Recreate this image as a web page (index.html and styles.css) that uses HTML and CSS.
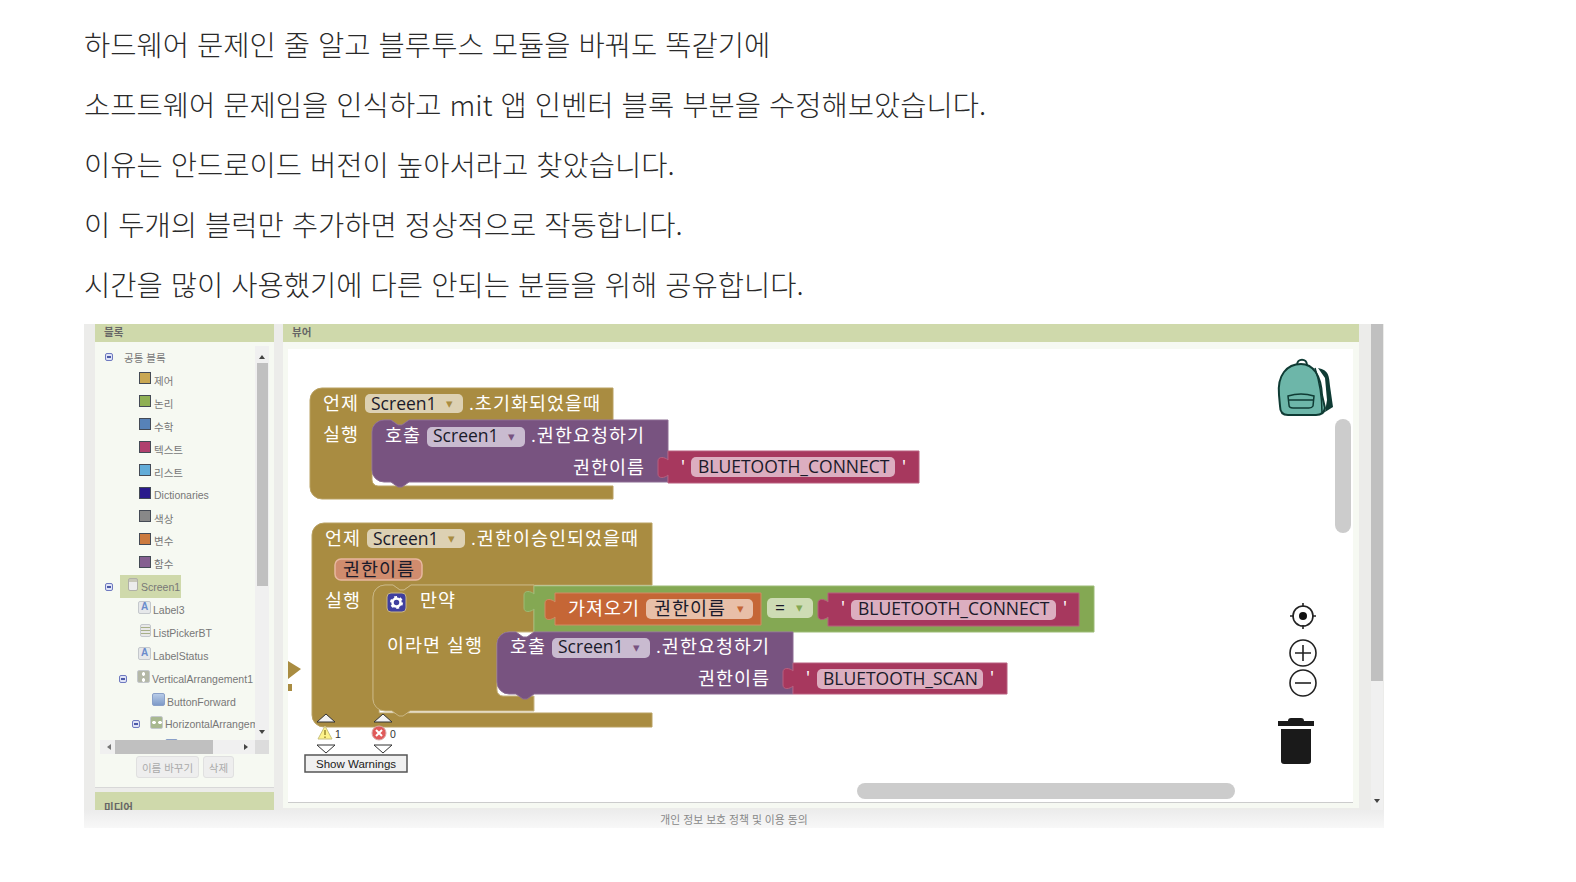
FILE: index.html
```html
<!DOCTYPE html>
<html lang="ko">
<head>
    <meta charset="UTF-8">
    <meta name="viewport" content="width=device-width, initial-scale=1.0">
    <title>블루투스 권한 블록</title>
    <link rel="stylesheet" href="styles.css">
</head>
<body>
    <div class="post">
        <p>하드웨어 문제인 줄 알고 블루투스 모듈을 바꿔도 똑같기에</p>
        <p>소프트웨어 문제임을 인식하고 mit 앱 인벤터 블록 부분을 수정해보았습니다.</p>
        <p>이유는 안드로이드 버전이 높아서라고 찾았습니다.</p>
        <p>이 두개의 블럭만 추가하면 정상적으로 작동합니다.</p>
        <p>시간을 많이 사용했기에 다른 안되는 분들을 위해 공유합니다.</p>
    </div>

    <div class="shot">
        <div class="shot-main">
            <div class="palette">
                <div class="box-head">블록</div>
                <div class="palette-body">
                    <div class="tree-area">
                        <div class="tree">
                            <div class="row root"><span class="exp"></span>공통 블록</div>
                            <div class="row item"><span class="swatch c-control"></span>제어</div>
                            <div class="row item"><span class="swatch c-logic"></span>논리</div>
                            <div class="row item"><span class="swatch c-math"></span>수학</div>
                            <div class="row item"><span class="swatch c-text"></span>텍스트</div>
                            <div class="row item"><span class="swatch c-list"></span>리스트</div>
                            <div class="row item"><span class="swatch c-dict"></span>Dictionaries</div>
                            <div class="row item"><span class="swatch c-color"></span>색상</div>
                            <div class="row item"><span class="swatch c-var"></span>변수</div>
                            <div class="row item"><span class="swatch c-proc"></span>함수</div>
                            <div class="row root"><span class="exp"></span><span class="selected"><span class="cmp cmp-screen"></span>Screen1</span></div>
                            <div class="row comp"><span class="cmp cmp-label">A</span>Label3</div>
                            <div class="row comp"><span class="cmp cmp-list"></span>ListPickerBT</div>
                            <div class="row comp"><span class="cmp cmp-label">A</span>LabelStatus</div>
                            <div class="row vert"><span class="exp"></span><span class="cmp cmp-vert"></span>VerticalArrangement1</div>
                            <div class="row btn-row"><span class="cmp cmp-button"></span>ButtonForward</div>
                            <div class="row horiz"><span class="exp"></span><span class="cmp cmp-horiz"></span>HorizontalArrangement1</div>
                            <div class="row last"><span class="cmp cmp-button"></span></div>
                        </div>
                        <div class="vscroll">
                            <span class="arrow-up"></span>
                            <div class="vthumb"></div>
                            <span class="arrow-down"></span>
                        </div>
                    </div>
                    <div class="hscroll">
                        <span class="arrow-left"></span>
                        <div class="hthumb"></div>
                        <span class="arrow-right"></span>
                        <div class="corner"></div>
                    </div>
                    <div class="tree-buttons">
                        <button class="soft-btn wide">이름 바꾸기</button>
                        <button class="soft-btn">삭제</button>
                    </div>
                </div>
                <div class="box-head media">미디어</div>
            </div>

            <div class="viewer">
                <div class="box-head">뷰어</div>
                <div class="viewer-body">
                    <svg class="workspace" width="1065" height="453" viewBox="288 349 1065 453">
                        <!-- first event -->
                        <path class="gold" d="M310,400a12,12 0 0 1 12,-12H613V420H409l-7,5h-4l-7,-5H384a12,12 0 0 0 -12,12V480a6,6 0 0 0 6,6H613V499H322a12,12 0 0 1 -12,-12Z"/>
                        <path class="purple" d="M384,420H391l7,5h4l7,-5H668V482H409l-7,5h-4l-7,-5H384a12,12 0 0 1 -12,-12V432a12,12 0 0 1 12,-12Z"/>
                        <path class="pink" d="M668,451H919V483H668V475c-3,3 -10,4 -10,-1v-13c0,-5 7,-4 10,-1Z"/>
                        <rect class="f-gold" x="365" y="394" width="98" height="19" rx="5"/>
                        <rect class="f-purple" x="427" y="427" width="98" height="20" rx="5"/>
                        <rect class="f-pink" x="691" y="457" width="204" height="20" rx="5"/>
                        <text class="lbl" x="323" y="410">언제</text>
                        <text class="fld" x="371" y="410">Screen1</text>
                        <text class="arr a-gold" x="446" y="408">▾</text>
                        <text class="lbl" x="469" y="410">.초기화되었을때</text>
                        <text class="lbl" x="323" y="441">실행</text>
                        <text class="lbl" x="385" y="442">호출</text>
                        <text class="fld" x="433" y="442">Screen1</text>
                        <text class="arr a-purple" x="508" y="441">▾</text>
                        <text class="lbl" x="531" y="442">.권한요청하기</text>
                        <text class="lbl" x="573" y="474">권한이름</text>
                        <text class="lbl" x="681" y="473">'</text>
                        <text class="fld" x="698" y="473">BLUETOOTH_CONNECT</text>
                        <text class="lbl" x="902" y="473">'</text>

                        <!-- second event -->
                        <path class="gold" d="M312,535a12,12 0 0 1 12,-12H652V585H411l-7,5h-4l-7,-5H385a12,12 0 0 0 -12,12V700a6,6 0 0 0 6,6V713H652V727H324a12,12 0 0 1 -12,-12Z"/>
                        <path class="gold inner" d="M385,585H393l7,5h4l7,-5H534V632H509a12,12 0 0 0 -12,12V690a6,6 0 0 0 6,6H534V711H410l-7,5h-4l-7,-5H385a12,12 0 0 1 -12,-12V597a12,12 0 0 1 12,-12Z"/>
                        <path class="green" d="M534,586H1094V632H534V609c-3,3 -10,4 -10,-1v-13c0,-5 7,-4 10,-1Z"/>
                        <path class="orange" d="M555,593H761V625H555V617c-3,3 -10,4 -10,-1v-13c0,-5 7,-4 10,-1Z"/>
                        <path class="pink" d="M828,593H1079V626H828V617c-3,3 -10,4 -10,-1v-13c0,-5 7,-4 10,-1Z"/>
                        <path class="purple" d="M509,632H516l7,5h4l7,-5H793V694H534l-7,5h-4l-7,-5H509a12,12 0 0 1 -12,-12V644a12,12 0 0 1 12,-12Z"/>
                        <path class="pink" d="M793,663H1007V694H793V686c-3,3 -10,4 -10,-1v-13c0,-5 7,-4 10,-1Z"/>
                        <rect class="f-gold" x="367" y="529" width="98" height="19" rx="5"/>
                        <rect class="f-param" x="335" y="559" width="87" height="21" rx="6"/>
                        <rect class="f-orange" x="646" y="599" width="107" height="20" rx="5"/>
                        <rect class="f-green" x="767" y="598" width="46" height="20" rx="5"/>
                        <rect class="f-pink" x="851" y="600" width="205" height="20" rx="5"/>
                        <rect class="f-purple" x="552" y="638" width="98" height="20" rx="5"/>
                        <rect class="f-pink" x="817" y="669" width="166" height="20" rx="5"/>
                        <text class="lbl" x="325" y="545">언제</text>
                        <text class="fld" x="373" y="545">Screen1</text>
                        <text class="arr a-gold" x="448" y="543">▾</text>
                        <text class="lbl" x="471" y="545">.권한이승인되었을때</text>
                        <text class="fld ko" x="343" y="576">권한이름</text>
                        <text class="lbl" x="325" y="607">실행</text>
                        <rect class="gear-box" x="387" y="593" width="19" height="19" rx="4"/>
                        <circle class="gear-teeth" cx="396.5" cy="602.5" r="5"/>
                        <circle class="gear-ring" cx="396.5" cy="602.5" r="4"/>
                        <text class="lbl" x="420" y="607">만약</text>
                        <text class="lbl" x="387" y="652">이라면 실행</text>
                        <text class="lbl" x="568" y="615">가져오기</text>
                        <text class="fld ko" x="654" y="615">권한이름</text>
                        <text class="arr a-orange" x="737" y="613">▾</text>
                        <text class="fld" x="775" y="614">=</text>
                        <text class="arr a-green" x="796" y="612">▾</text>
                        <text class="lbl" x="841" y="614">'</text>
                        <text class="fld" x="858" y="615">BLUETOOTH_CONNECT</text>
                        <text class="lbl" x="1063" y="614">'</text>
                        <text class="lbl" x="510" y="653">호출</text>
                        <text class="fld" x="558" y="653">Screen1</text>
                        <text class="arr a-purple" x="633" y="652">▾</text>
                        <text class="lbl" x="656" y="653">.권한요청하기</text>
                        <text class="lbl" x="698" y="685">권한이름</text>
                        <text class="lbl" x="806" y="684">'</text>
                        <text class="fld" x="823" y="685">BLUETOOTH_SCAN</text>
                        <text class="lbl" x="990" y="684">'</text>

                        <!-- warning indicator -->
                        <path class="tri" d="M317,722l9,-8 9,8Z"/>
                        <path class="tri" d="M374,722l9,-8 9,8Z"/>
                        <path class="warn" d="M325,726l7,13h-14Z"/>
                        <path class="warn-mark" d="M325,730v5M325,736.5v1.5"/>
                        <text class="count" x="335" y="738">1</text>
                        <circle class="err" cx="379" cy="733" r="7"/>
                        <path class="err-x" d="M376,730l6,6M382,730l-6,6"/>
                        <text class="count" x="390" y="738">0</text>
                        <path class="tri-down" d="M317,745l9,8 9,-8Z"/>
                        <path class="tri-down" d="M374,745l9,8 9,-8Z"/>
                        <rect class="warn-btn" x="305" y="755" width="102" height="17"/>
                        <text class="warn-txt" x="316" y="768">Show Warnings</text>

                        <!-- backpack -->
                        <path class="pack-strap" d="M1318,368C1329,370 1329,376 1330,386L1333,407L1325,412L1327,400L1325,378Z"/>
                        <path class="pack-handle" d="M1297,365c0,-7 10,-7 10,0"/>
                        <path class="pack-body" d="M1279,395C1277,375 1287,364 1301,364C1313,364 1321,375 1322,395L1325,408Q1324,415 1316,415L1288,415Q1280,415 1280,406Z"/>
                        <path class="pack-line" d="M1315,368C1319,380 1322,395 1322,413"/>
                        <path class="pack-line" d="M1288,396Q1301,392 1314,396L1313,406Q1312,408 1309,408H1293Q1289,408 1289,405ZM1288,400H1314"/>

                        <!-- workspace controls -->
                        <circle class="ctl" cx="1303" cy="616" r="10"/>
                        <circle class="ctl-dot" cx="1303" cy="616" r="4"/>
                        <path class="ctl" d="M1303,603v4M1303,625v4M1290,616h4M1312,616h4"/>
                        <circle class="ctl" cx="1303" cy="653" r="13"/>
                        <path class="ctl" d="M1295,653h16M1303,645v16"/>
                        <circle class="ctl" cx="1303" cy="683" r="13"/>
                        <path class="ctl" d="M1295,683h16"/>
                        <path class="trash" d="M1288,721q0,-3 3,-3h10q3,0 3,3h10v5h-36v-5ZM1281,729h30v32q0,3 -3,3h-24q-3,0 -3,-3Z"/>

                        <rect class="ws-bar" x="1335" y="419" width="16" height="114" rx="8"/>
                        <rect class="ws-bar" x="857" y="783" width="378" height="16" rx="8"/>
                    </svg>
                </div>
                <svg class="bump" width="14" height="32" viewBox="0 0 14 32">
                    <path d="M0,0L13,8L0,18ZM0,23h4v7h-4Z"/>
                </svg>
            </div>

            <div class="page-scroll">
                <div class="page-thumb"></div>
                <span class="arrow-down"></span>
            </div>
        </div>
        <div class="shot-foot">개인 정보 보호 정책 및 이용 동의</div>
    </div>
</body>
</html>
```

FILE: styles.css
```css
body {
    margin: 0;
    background: white;
    font-family: "Noto Sans CJK KR", sans-serif;
}

/* text above the screenshot */
.post {
    padding: 14px 0 10px 84px;
}
.post p {
    margin: 0;
    height: 60px;
    line-height: 60px;
    font-size: 28.55px;
    font-weight: 300;
    color: #2a2a2a;
}

/* screenshot */
.shot {
    width: 1300px;
    margin-left: 84px;
    background: #ececea;
}
.shot-main {
    display: flex;
    height: 486px;
    padding-left: 11px;
    overflow: hidden;
}
.shot-foot {
    height: 18px;
    line-height: 18px;
    text-align: center;
    font-size: 10.8px;
    color: #888;
    background: linear-gradient(#ececec, #f8f8f8);
}

.box-head {
    height: 18px;
    line-height: 16px;
    padding-left: 9px;
    background: #cfd9ab;
    font-size: 10.5px;
    font-weight: 700;
    color: #666;
}

/* palette */
.palette {
    width: 179px;
    margin-right: 9px;
}
.palette-body {
    height: 446px;
    box-sizing: border-box;
    padding: 4px 5px 0;
    background: #f6f9f2;
    border-bottom: 1px solid #d8d8d8;
    font-family: "Liberation Sans", "Noto Sans CJK KR", sans-serif;
    font-size: 10.5px;
    color: #777;
}
.media {
    margin-top: 4px;
    line-height: 30px;
    height: 18px;
    overflow: hidden;
}
.tree-area {
    display: flex;
    height: 394px;
}
.tree {
    width: 155px;
    overflow: hidden;
    white-space: nowrap;
}
.row {
    display: flex;
    align-items: center;
    height: 22.95px;
}
.root { padding-left: 5px; }
.item { padding-left: 39px; }
.comp { padding-left: 38px; }
.vert { padding-left: 19px; }
.btn-row { padding-left: 52px; }
.horiz { padding-left: 32px; }
.last { padding-left: 65px; }
.root > .exp { margin-right: 11px; }
.exp {
    position: relative;
    flex: none;
    box-sizing: border-box;
    width: 8px;
    height: 8px;
    border: 1px solid #6f7ac0;
    border-radius: 2px;
    background: #dfe3f6;
}
.exp::after {
    content: "";
    position: absolute;
    left: 1px;
    top: 2px;
    width: 4px;
    height: 2px;
    background: #4c5aa8;
}
.root > .exp + .selected {
    margin-left: -4px;
}
.selected {
    display: flex;
    align-items: center;
    width: 61px;
    height: 23px;
    box-sizing: border-box;
    padding-left: 7px;
    background: #cfd9ab;
}
.swatch {
    flex: none;
    box-sizing: border-box;
    width: 12px;
    height: 12px;
    margin: -4px 3px 0 0;
    border: 1px solid #444a55;
}
.c-control { background: #c9a752; }
.c-logic { background: #8fb054; }
.c-math { background: #5782b8; }
.c-text { background: #b0406e; }
.c-list { background: #62acd8; }
.c-dict { background: #2a1a8c; }
.c-color { background: #888; }
.c-var { background: #cc7a3e; }
.c-proc { background: #855f90; }
.cmp {
    flex: none;
    box-sizing: border-box;
    width: 13px;
    height: 13px;
    margin: -4px 2px 0 0;
    border: 1px solid #c4c8cc;
    border-radius: 2px;
    background: #e6e8ea;
}
.vert > .cmp, .horiz > .cmp { margin-left: 10px; }
.cmp-screen {
    width: 10px;
    margin-left: 1px;
    margin-right: 3px;
    border-color: #b0b0a8;
    background: linear-gradient(#c8c8b8 3px, #ececec 3px);
}
.cmp-label {
    font-size: 10px;
    line-height: 10px;
    font-weight: 700;
    text-align: center;
    color: #6a8ccc;
}
.cmp-list {
    width: 11px;
    margin-left: 2px;
    background: repeating-linear-gradient(#e8e8e8 0 2px, #a8b088 2px 3px);
}
.cmp-vert {
    background: radial-gradient(circle, #fff 1.5px, #b4b8a8 2px);
    background-size: 100% 6px;
}
.cmp-button {
    border-color: #8aa0c8;
    background: linear-gradient(#b8cce8, #7e9ac8);
}
.cmp-horiz {
    background: radial-gradient(circle, #fff 1.5px, #a8b890 2px);
    background-size: 6px 100%;
}

/* little scrollbars */
.vscroll {
    position: relative;
    width: 14px;
    background: #f0f0f0;
}
.vthumb {
    width: 11px;
    height: 223px;
    margin: 17px 0 0 2px;
    background: #c0c0c0;
}
.arrow-up, .arrow-down, .arrow-left, .arrow-right {
    position: absolute;
    width: 0;
    height: 0;
    border: 3px solid transparent;
}
.arrow-up {
    left: 4px;
    top: 6px;
    border-bottom: 4px solid #444;
}
.vscroll .arrow-down {
    left: 4px;
    top: 384px;
    border-top: 4px solid #444;
}
.hscroll {
    position: relative;
    display: flex;
    height: 14px;
    background: #f0f0f0;
}
.hthumb {
    width: 98px;
    height: 14px;
    margin-left: 15px;
    background: #c0c0c0;
}
.arrow-left {
    left: 4px;
    top: 4px;
    border-right: 4px solid #777;
}
.arrow-right {
    left: 144px;
    top: 4px;
    border-left: 4px solid #444;
}
.corner {
    position: absolute;
    right: 0;
    width: 14px;
    height: 14px;
    background: #dcdcdc;
}
.tree-buttons {
    display: flex;
    gap: 4px;
    margin: 2px 0 0 36px;
}
.soft-btn {
    width: 31px;
    height: 22px;
    padding: 0;
    border: 1px solid #e0e0e0;
    border-radius: 3px;
    background: #eee;
    font-family: "Noto Sans CJK KR", sans-serif;
    font-size: 10.5px;
    color: #aaa;
}
.soft-btn.wide { width: 63px; }

/* viewer */
.viewer {
    position: relative;
    width: 1076px;
    margin-right: 12px;
}
.viewer-body {
    height: 466px;
    box-sizing: border-box;
    padding: 7px 6px 0 5px;
    background: #f6f9f2;
}
.workspace {
    display: block;
    background: white;
    border-bottom: 1px solid #ccc;
}
.bump {
    position: absolute;
    left: 5px;
    top: 337px;
    fill: #a98c41;
}
.page-scroll {
    position: relative;
    width: 12px;
    background: #f0f0f0;
}
.page-thumb {
    height: 357px;
    background: #c0c0c0;
}
.page-scroll .arrow-down {
    left: 3px;
    top: 475px;
    border-top: 4px solid #444;
}

/* blocks */
.gold { fill: #a98c41; stroke: #b9a163; }
.gold.inner { stroke: #c9b684; }
.purple { fill: #785380; stroke: #8c6d93; }
.pink { fill: #a7385e; stroke: #b85f7e; }
.green { fill: #84a853; stroke: #9cbb76; }
.orange { fill: #c56636; stroke: #d38a64; }
.f-gold { fill: #ddd1b3; }
.f-purple { fill: #c9bbd0; }
.f-pink { fill: #dcaec0; }
.f-orange { fill: #e8bfa8; }
.f-green { fill: #cedcb4; }
.f-param { fill: #d08c6e; stroke: #e8b79f; stroke-width: 1.5; }
.workspace text {
    font-family: "Open Sans", "Noto Sans CJK KR", sans-serif;
    font-size: 17.5px;
}
.workspace .lbl, .workspace .ko {
    font-size: 18.5px;
    letter-spacing: 1px;
}
.workspace .lbl { fill: white; }
.workspace .fld { fill: #1a1a2a; }
.workspace .arr { font-size: 13px; }
.a-gold { fill: #a98c41; }
.a-purple { fill: #785380; }
.a-orange { fill: #c56636; }
.a-green { fill: #84a853; }
.gear-box { fill: #3f3f9f; stroke: #c9b684; }
.gear-teeth { fill: none; stroke: white; stroke-width: 3; stroke-dasharray: 2.6 2.6; }
.gear-ring { fill: none; stroke: white; stroke-width: 2.5; }
.tri { fill: #f2f2f2; stroke: #333; }
.tri-down { fill: white; stroke: #333; }
.warn { fill: #fdf28a; stroke: #c8c080; stroke-linejoin: round; }
.warn-mark { stroke: #9a8a30; stroke-width: 1.5; fill: none; }
.err { fill: #e05a5a; stroke: #d8a8a8; }
.err-x { stroke: white; stroke-width: 2; fill: none; }
.workspace .count { font-size: 10.5px; font-family: "Liberation Sans", sans-serif; fill: #333; }
.warn-btn { fill: #f0f0f0; stroke: #555; stroke-width: 1.5; }
.workspace .warn-txt { font-family: "Liberation Sans", sans-serif; font-size: 11.5px; fill: #222; }
.pack-strap { fill: #0f3b34; }
.pack-handle { fill: none; stroke: #0f3b34; stroke-width: 2; }
.pack-body { fill: #6db6a9; stroke: #0f3b34; stroke-width: 2; }
.pack-line { fill: none; stroke: #0f3b34; stroke-width: 1.5; }
.ctl { fill: none; stroke: #222; stroke-width: 1.6; }
.ctl-dot { fill: #111; }
.trash { fill: #1a1a1a; }
.ws-bar { fill: #ccc; }
```
